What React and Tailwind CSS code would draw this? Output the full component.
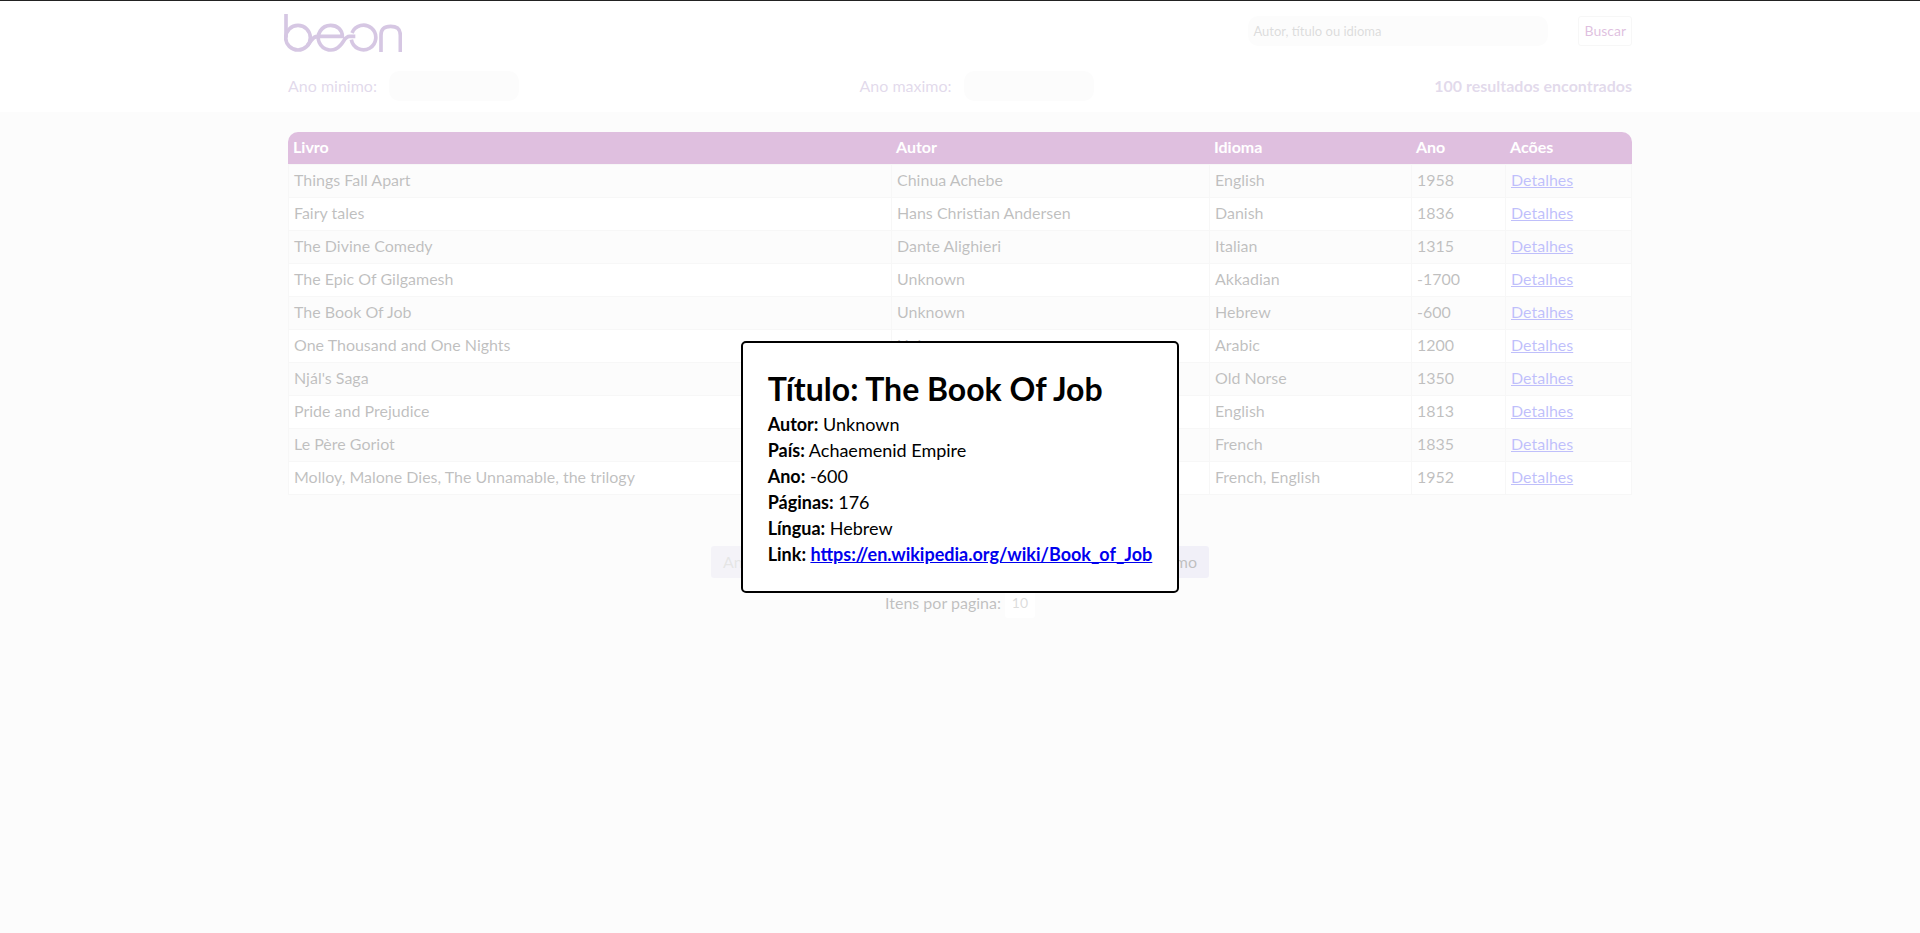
const rows = [
  ['Things Fall Apart', 'Chinua Achebe', 'English', '1958'],
  ['Fairy tales', 'Hans Christian Andersen', 'Danish', '1836'],
  ['The Divine Comedy', 'Dante Alighieri', 'Italian', '1315'],
  ['The Epic Of Gilgamesh', 'Unknown', 'Akkadian', '-1700'],
  ['The Book Of Job', 'Unknown', 'Hebrew', '-600'],
  ['One Thousand and One Nights', 'Unknown', 'Arabic', '1200'],
  ["Njál's Saga", 'Unknown', 'Old Norse', '1350'],
  ['Pride and Prejudice', 'Jane Austen', 'English', '1813'],
  ['Le Père Goriot', 'Honoré de Balzac', 'French', '1835'],
  ['Molloy, Malone Dies, The Unnamable, the trilogy', 'Samuel Beckett', 'French, English', '1952'],
];

const details = [
  ['Autor:', 'Unknown'],
  ['País:', 'Achaemenid Empire'],
  ['Ano:', '-600'],
  ['Páginas:', '176'],
  ['Língua:', 'Hebrew'],
];

function Logo() {
  return (
    <svg role="img" aria-label="beon" className="-ml-1 h-[38px] w-[118px]" viewBox="42 42 354 114" fill="none" stroke="#5b2390" strokeWidth="11">
      <path d="M48 42v71" />
      <circle cx="84" cy="113" r="37" />
      <path d="M112 137c14-14 14-28 30-28h75c0-20-15-33-35-33a37 37 0 1 0 27 62c14-12 14-29 30-29h17" />
      <path d="M246 99a37 37 0 1 1-2 20" />
      <path d="M333 156v-50c0-20 10-27 29-27s29 7 29 27v50" />
    </svg>
  );
}

function YearField({ id, label }) {
  return (
    <div className="flex items-center gap-3">
      <label htmlFor={id} className="text-[#8c6cb0]">{label}</label>
      <input id={id} type="number" className="h-[30px] w-[130px] rounded-[10px] bg-[#f3f3f3] px-1.5" />
    </div>
  );
}

export default function App() {
  return (
    <div className="min-h-screen border-t border-[#222] bg-[#f3f3f3] font-['Lato',sans-serif] text-base font-normal text-black">
      <header className="bg-white pb-[11px]">
        <div className="mx-auto w-[70%]">
          <div className="flex h-[60px] items-start justify-between pt-[13px]">
            <Logo />
            <form className="flex items-center gap-[30px] pt-0.5">
              <input aria-label="Busca" type="text" placeholder="Autor, título ou idioma" className="h-[30px] w-[300px] rounded-[10px] bg-[#f3f3f3] px-[5px] text-[13px] placeholder:text-[#757575]" />
              <button type="button" className="h-[30px] rounded-[3px] border border-[#ddd] px-[5px] text-sm text-[#800080]">Buscar</button>
            </form>
          </div>
          <div className="flex h-10 items-center justify-between pt-2.5">
            <YearField id="min" label="Ano minimo:" />
            <YearField id="max" label="Ano maximo:" />
            <p className="font-bold text-[#8c6cb0]">100 resultados encontrados</p>
          </div>
        </div>
      </header>

      <main className="mx-auto w-[70%] pt-5">
        <table className="w-full table-fixed border-separate border-spacing-0 text-left">
          <colgroup>
            <col />
            <col className="w-[318px]" />
            <col className="w-[202px]" />
            <col className="w-[94px]" />
            <col className="w-[127px]" />
          </colgroup>
          <thead>
            <tr className="h-8 bg-transparent text-white">
              {['Livro', 'Autor', 'Idioma', 'Ano', 'Acões'].map((h) => (
                <th key={h} className="bg-[#800080] px-[5px] pb-0.5 font-bold first:rounded-tl-[10px] last:rounded-tr-[10px]">{h}</th>
              ))}
            </tr>
          </thead>
          <tbody>
            {rows.map((r) => (
              <tr key={r[0]} className="group h-[33px] first:h-[34px] odd:bg-[#f3f3f3] even:bg-white">
                {r.map((c, i) => (
                  <td key={i} className="border-b border-l border-[#ddd] px-[5px] pb-0.5 group-first:border-t">{c}</td>
                ))}
                <td className="border-x border-b border-[#ddd] px-[5px] pb-0.5 group-first:border-t">
                  <a href="#detalhes" className="text-[#0000ee] underline">Detalhes</a>
                </td>
              </tr>
            ))}
          </tbody>
        </table>

        <nav className="mx-auto mt-[51px] flex w-[498px] justify-between">
          <button type="button" disabled className="h-8 rounded-[3px] bg-[#d2d0e4] px-3 text-[#999]">Anterior</button>
          <button type="button" className="h-8 rounded-[3px] bg-[#c8c4e4] px-3">Próximo</button>
        </nav>
        <div className="mt-2.5 flex items-center justify-center gap-1">
          <label htmlFor="size">Itens por pagina:</label>
          <select id="size" defaultValue="10" className="h-[30px] w-[30px] appearance-none rounded-[3px] bg-white text-center text-sm text-[#757575]">
            <option>10</option>
          </select>
        </div>
      </main>

      <div className="fixed inset-x-0 top-px bottom-0 flex items-center justify-center bg-white/75">
        <section role="dialog" aria-modal="true" aria-labelledby="titulo" className="rounded-[5px] border-2 border-black bg-white px-[25px] py-6 text-lg leading-[26px]">
          <h1 id="titulo" className="text-[32px] leading-[44px] font-bold">Título: The Book Of Job</h1>
          {details.map(([k, v]) => (
            <p key={k}><strong className="font-bold">{k}</strong> {v}</p>
          ))}
          <p className="font-bold">
            Link: <a href="https://en.wikipedia.org/wiki/Book_of_Job" className="text-[#0000ee] underline">https://en.wikipedia.org/wiki/Book_of_Job</a>
          </p>
        </section>
      </div>
    </div>
  );
}
